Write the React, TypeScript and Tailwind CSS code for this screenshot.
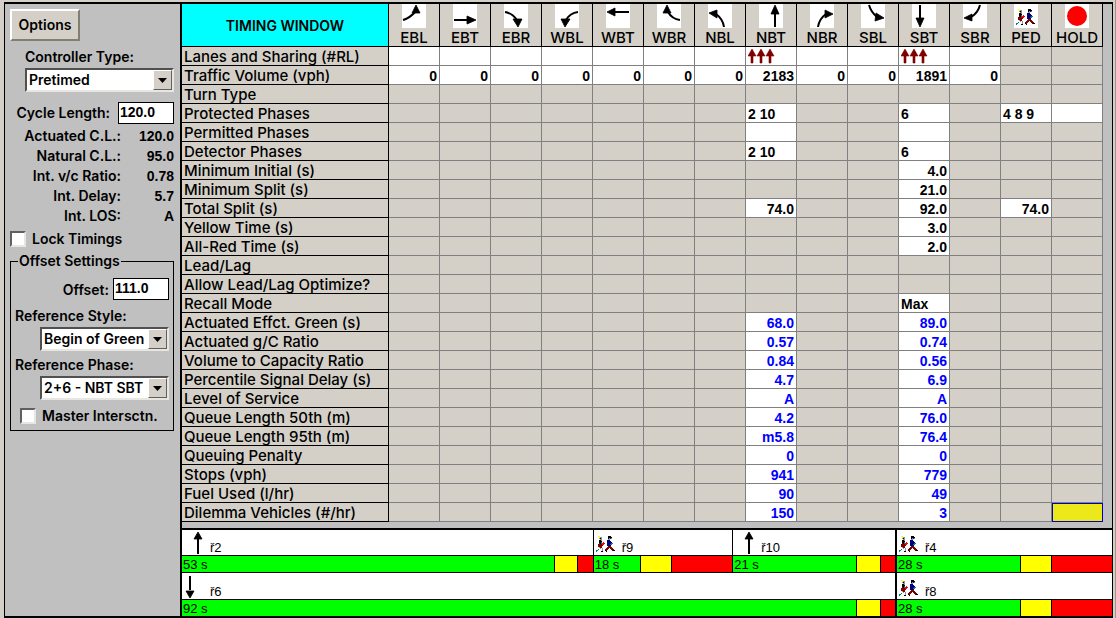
import type { ReactNode } from 'react';
import clsx from 'clsx';

type Direction = { name: string; icon: ReactNode };

const arrow = (curve: string, head: string) => (
  <>
    <path d={curve} fill="none" stroke="black" strokeWidth="2" />
    <path d={head} fill="black" stroke="black" strokeWidth="0.8" />
  </>
);

const PED_ROWS = [
  '..YY........KKK.....',
  '...YGG......KKKK....',
  '...GKG......KGBG....',
  '....GG......GG......',
  '...KKG.....NNN......',
  '...KKK.....NNNN.....',
  '...KKT.R...NNNNN....',
  '...DKTRRR..NNNNTT...',
  '..DDDDRR...NNNTT....',
  '..DDDDD....NNNN.....',
  '..DDDD......DDD.....',
  '...GDD.....DDDDD....',
  '....G.G...DDD.DDD...',
  '..T...G..DDD...DDD..',
  'TT....G..KD.....DKK.',
  'T....KK...K.........',
];

const PED_COLORS: Record<string, string> = {
  Y: '#ffff00',
  G: '#909090',
  K: '#000000',
  B: '#0000ff',
  T: '#008080',
  N: '#000080',
  R: '#ff0000',
  D: '#800000',
};

function PedPixels() {
  return (
    <g shapeRendering="crispEdges">
      {PED_ROWS.flatMap((row, y) =>
        row.split('').map((c, x) =>
          PED_COLORS[c] ? <rect key={`${x}-${y}`} x={x} y={y} width="1" height="1" fill={PED_COLORS[c]} /> : null
        )
      )}
    </g>
  );
}

const DIRECTIONS: Direction[] = [
  { name: 'EBL', icon: arrow('M1 16Q8 14 14 7', 'M14 1L18 9L10 9Z') },
  { name: 'EBT', icon: arrow('M1 16H15', 'M23 16L14 12V20Z') },
  { name: 'EBR', icon: arrow('M1 8Q8 9 13 16', 'M14 23L18 15H9Z') },
  { name: 'WBL', icon: arrow('M23 8Q15 9 11 16', 'M10 23L15 15H6Z') },
  { name: 'WBT', icon: arrow('M23 8H9', 'M1 8L9 4V12Z') },
  { name: 'WBR', icon: arrow('M23 16Q15 15 11 8', 'M10 1L14 9H6Z') },
  { name: 'NBL', icon: arrow('M16 23Q15 15 8 10', 'M1 9L9 6V14Z') },
  { name: 'NBT', icon: arrow('M16 23V9', 'M16 1L20 10H12Z') },
  { name: 'NBR', icon: arrow('M8 23Q9 15 16 10', 'M23 10L15 6V14Z') },
  { name: 'SBL', icon: arrow('M8 1Q10 8 16 13', 'M23 14L15 9L14 17Z') },
  { name: 'SBT', icon: arrow('M8 1V15', 'M8 23L4 14H12Z') },
  { name: 'SBR', icon: arrow('M17 1Q15 9 8 13', 'M1 14L9 10V17Z') },
  { name: 'PED', icon: <g transform="translate(2 5)"><PedPixels /></g> },
  { name: 'HOLD', icon: <circle cx="12" cy="12" r="10" fill="#ff0000" /> },
];

type Row = { label: string; cells?: Record<string, string>; align?: 'left'; blue?: boolean };

const result = (label: string, nbt: string, sbt: string): Row => ({ label, cells: { NBT: nbt, SBT: sbt }, blue: true });

const ROWS: Row[] = [
  {
    label: 'Lanes and Sharing (#RL)',
    cells: { EBL: '', EBT: '', EBR: '', WBL: '', WBT: '', WBR: '', NBL: '', NBT: 'lanes', NBR: '', SBL: '', SBT: 'lanes', SBR: '' },
    align: 'left',
  },
  {
    label: 'Traffic Volume (vph)',
    cells: {
      EBL: '0', EBT: '0', EBR: '0', WBL: '0', WBT: '0', WBR: '0', NBL: '0',
      NBT: '2183', NBR: '0', SBL: '0', SBT: '1891', SBR: '0',
    },
  },
  { label: 'Turn Type' },
  { label: 'Protected Phases', cells: { NBT: '2 10', SBT: '6', PED: '4 8 9', HOLD: '' }, align: 'left' },
  { label: 'Permitted Phases', cells: { NBT: '', SBT: '' } },
  { label: 'Detector Phases', cells: { NBT: '2 10', SBT: '6' }, align: 'left' },
  { label: 'Minimum Initial (s)', cells: { SBT: '4.0' } },
  { label: 'Minimum Split (s)', cells: { SBT: '21.0' } },
  { label: 'Total Split (s)', cells: { NBT: '74.0', SBT: '92.0', PED: '74.0' } },
  { label: 'Yellow Time (s)', cells: { SBT: '3.0' } },
  { label: 'All-Red Time (s)', cells: { SBT: '2.0' } },
  { label: 'Lead/Lag' },
  { label: 'Allow Lead/Lag Optimize?' },
  { label: 'Recall Mode', cells: { SBT: 'Max' }, align: 'left' },
  result('Actuated Effct. Green (s)', '68.0', '89.0'),
  result('Actuated g/C Ratio', '0.57', '0.74'),
  result('Volume to Capacity Ratio', '0.84', '0.56'),
  result('Percentile Signal Delay (s)', '4.7', '6.9'),
  result('Level of Service', 'A', 'A'),
  result('Queue Length 50th (m)', '4.2', '76.0'),
  result('Queue Length 95th (m)', 'm5.8', '76.4'),
  result('Queuing Penalty', '0', '0'),
  result('Stops (vph)', '941', '779'),
  result('Fuel Used (l/hr)', '90', '49'),
  result('Dilemma Vehicles (#/hr)', '150', '3'),
];

function LaneArrows() {
  return (
    <svg width="27" height="16" viewBox="0 0 27 16" className="block" aria-label="3 through lanes">
      {[0, 9, 18].map(x => (
        <path key={x} d={`M${x + 4} 0L${x + 8} 7H${x + 5}V14H${x + 3}V7H${x}Z`} fill="#800000" stroke="#800000" strokeWidth="0.6" />
      ))}
    </svg>
  );
}

function TimingTable() {
  return (
    <table className="w-full table-fixed border-separate border-spacing-0">
      <colgroup>
        <col className="w-[207px]" />
        {DIRECTIONS.map(d => <col key={d.name} />)}
      </colgroup>
      <thead>
        <tr className="h-[43px]">
          <th className="border-r border-b border-black bg-[#00ffff] p-0 text-center text-[14px] font-semibold">
            TIMING WINDOW
          </th>
          {DIRECTIONS.map(d => (
            <th key={d.name} className="border-r border-b border-black p-0 align-top text-[15px] leading-4 font-medium">
              <svg width="24" height="24" viewBox="0 0 24 24" className="mx-auto mb-0.5 block bg-white">{d.icon}</svg>
              {d.name}
            </th>
          ))}
        </tr>
      </thead>
      <tbody>
        {ROWS.map((row, i) => (
          <tr key={row.label} className="h-[19px]">
            <th className="border-r border-b border-black p-0 pt-0.5 pl-0.5 text-left text-[15px] leading-4 font-medium whitespace-nowrap">
              {row.label}
            </th>
            {DIRECTIONS.map(({ name }) => {
              const value = row.cells?.[name];
              const selected = name === 'HOLD' && i === ROWS.length - 1;
              return (
                <td
                  key={name}
                  className={clsx(
                    'border-r border-b border-[#808080] px-0.5 pt-0.5 pb-0 font-["Liberation_Sans",sans-serif] text-[14px] leading-4 font-bold whitespace-nowrap',
                    row.align === 'left' ? 'text-left' : 'text-right',
                    row.blue ? 'text-[#0000ff]' : 'text-black',
                    value !== undefined && 'bg-white',
                    selected && 'bg-[#ece81a] outline outline-1 -outline-offset-1 outline-[#0000c0]'
                  )}
                >
                  {value === 'lanes' ? <LaneArrows /> : value}
                </td>
              );
            })}
          </tr>
        ))}
      </tbody>
    </table>
  );
}

type Phase = { id: number; icon: 'up' | 'down' | 'ped'; total: number; yellow: number; red: number };

const RINGS: Phase[][][] = [
  [
    [
      { id: 2, icon: 'up', total: 53, yellow: 3, red: 2 },
      { id: 9, icon: 'ped', total: 18, yellow: 4, red: 8 },
      { id: 10, icon: 'up', total: 21, yellow: 3, red: 2 },
    ],
    [{ id: 4, icon: 'ped', total: 28, yellow: 4, red: 8 }],
  ],
  [
    [{ id: 6, icon: 'down', total: 92, yellow: 3, red: 2 }],
    [{ id: 8, icon: 'ped', total: 28, yellow: 4, red: 8 }],
  ],
];

const sumSplits = (phases: Phase[]) => phases.reduce((sum, p) => sum + p.total, 0);
const share = (part: number, whole: number) => ({ width: `${(part / whole) * 100}%` });

function PhaseIcon({ icon }: { icon: Phase['icon'] }) {
  return (
    <svg width="28" height="24" viewBox="0 0 28 24" className="shrink-0">
      {icon === 'up' && arrow('M16 23V8', 'M16 1L20 8H12Z')}
      {icon === 'down' && arrow('M8 1V15', 'M8 23L4 16H12Z')}
      {icon === 'ped' && <g transform="translate(2 5)"><PedPixels /></g>}
    </svg>
  );
}

function PhaseBlock({ phase, groupTotal, first }: { phase: Phase; groupTotal: number; first: boolean }) {
  const { id, icon, total, yellow, red } = phase;
  return (
    <div className={clsx('shrink-0', !first && 'border-l border-black')} style={share(total, groupTotal)}>
      <div className="flex h-[25px] items-end overflow-hidden bg-white">
        <PhaseIcon icon={icon} />
        <span className="leading-[14px]">ř{id}</span>
      </div>
      <div className="flex h-[17px] border-t border-black">
        <div className="shrink-0 bg-[#00ff00] pl-px leading-[17px] whitespace-nowrap" style={share(total - yellow - red, total)}>
          {total} s
        </div>
        <div className="shrink-0 border-l border-black bg-[#ffff00]" style={share(yellow, total)} />
        <div className="min-w-0 flex-1 border-l border-black bg-[#ff0000]" />
      </div>
    </div>
  );
}

function SplitDiagram() {
  return (
    <div className="mt-1.5 border-t-2 border-black font-['Liberation_Sans',sans-serif] text-[13px]">
      {RINGS.map((groups, r) => {
        const cycle = groups.reduce((sum, phases) => sum + sumSplits(phases), 0);
        return (
          <div key={r} className={clsx('flex bg-white', r > 0 && 'border-t border-black')}>
            {groups.map((phases, g) => (
              <div
                key={g}
                className={clsx('flex shrink-0', r > 0 && 'pt-px', g > 0 && 'border-l-2 border-black')}
                style={share(sumSplits(phases), cycle)}
              >
                {phases.map((p, i) => (
                  <PhaseBlock key={p.id} phase={p} groupTotal={sumSplits(phases)} first={i === 0} />
                ))}
              </div>
            ))}
          </div>
        );
      })}
    </div>
  );
}

function SelectBox({ id, value, className }: { id: string; value: string; className?: string }) {
  return (
    <div className={clsx('relative h-6 border-2 border-t-[#505050] border-l-[#505050] border-r-[#e8e6e0] border-b-[#e8e6e0] bg-white', className)}>
      <select id={id} defaultValue={value} className="block h-5 w-full appearance-none pl-0.5 text-[14px] leading-5 outline-none">
        <option>{value}</option>
      </select>
      <span className="pointer-events-none absolute inset-y-0 right-0 flex w-[19px] items-center justify-center border border-t-white border-l-white border-r-[#606060] border-b-[#606060] bg-[#d4d0c8]">
        <svg width="9" height="5" viewBox="0 0 9 5"><path d="M0 0H9L4.500 5Z" /></svg>
      </span>
    </div>
  );
}

function Check({ label, className }: { label: string; className?: string }) {
  return (
    <label className={clsx('flex h-4 items-center gap-1.5', className)}>
      <input
        type="checkbox"
        className="size-4 shrink-0 appearance-none border-2 border-t-[#606060] border-l-[#606060] border-r-[#e8e6e0] border-b-[#e8e6e0] bg-white"
      />
      {label}
    </label>
  );
}

const STATS = [
  ['Actuated C.L.:', '120.0'],
  ['Natural C.L.:', '95.0'],
  ['Int. v/c Ratio:', '0.78'],
  ['Int. Delay:', '5.7'],
  ['Int. LOS:', 'A'],
];

function Sidebar() {
  return (
    <aside className="w-[175px] shrink-0 pt-[5px] pr-1.5 pl-[5px] text-[14px] leading-5 font-semibold whitespace-nowrap">
      <button className="h-8 w-[70px] border-2 border-t-white border-l-white border-r-[#808070] border-b-[#808070] bg-[#d4d0c8]">
        Options
      </button>
      <label htmlFor="controller" className="mt-1.5 ml-[15px] block">Controller Type:</label>
      <SelectBox id="controller" value="Pretimed" className="mt-px ml-[15px]" />
      <div className="mt-2.5 flex items-center justify-end gap-2">
        <label htmlFor="cycle">Cycle Length:</label>
        <input id="cycle" defaultValue="120.0" className="h-[22px] w-14 border border-black bg-white px-px pb-0.5 font-['Liberation_Sans',sans-serif] font-bold outline-none" />
      </div>
      <dl className="mt-0.5">
        {STATS.map(([name, value]) => (
          <div key={name} className="flex h-5 justify-end">
            <dt>{name}</dt>
            <dd className="w-[53px] text-right font-['Liberation_Sans',sans-serif] font-bold">{value}</dd>
          </div>
        ))}
      </dl>
      <Check label="Lock Timings" className="mt-[5px]" />
      <fieldset className="mt-1 h-[180px] border border-black px-1">
        <legend className="ml-[3px] px-px leading-5">Offset Settings</legend>
        <div className="mt-[7px] flex items-end justify-end gap-1">
          <label htmlFor="offset">Offset:</label>
          <input id="offset" defaultValue="111.0" className="h-[22px] w-14 border border-black bg-white px-px pb-0.5 font-['Liberation_Sans',sans-serif] font-bold outline-none" />
        </div>
        <label htmlFor="refstyle" className="mt-1.5 block">Reference Style:</label>
        <SelectBox id="refstyle" value="Begin of Green" className="mt-px ml-[25px]" />
        <label htmlFor="refphase" className="mt-1 block">Reference Phase:</label>
        <SelectBox id="refphase" value="2+6 - NBT SBT" className="mt-px ml-[25px]" />
        <Check label="Master Intersctn." className="mt-2 ml-[5px]" />
      </fieldset>
    </aside>
  );
}

export default function App() {
  return (
    <div className="min-h-screen border-r border-[#9c9484] bg-[#d4d0c8] pt-0.5 pr-0.5 pl-1 font-[Inter,sans-serif] text-black">
      <div className="flex border-x border-y-2 border-black bg-[#c0c0c0]">
        <Sidebar />
        <main className="min-w-0 flex-1 border-l-2 border-black">
          <div className="mr-[9px] bg-[#d4d0c8]">
            <TimingTable />
          </div>
          <SplitDiagram />
        </main>
      </div>
    </div>
  );
}
